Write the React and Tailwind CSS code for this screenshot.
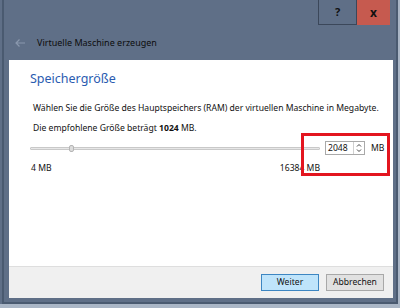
import React from "react";

export default function App() {
  const font = { fontFamily: '"Noto Sans", "Liberation Sans", sans-serif' };
  return (
    <div
      className="relative w-[400px] h-[308px] overflow-hidden bg-[#5f6f87] flex flex-col"
      style={font}
    >
      {/* caption buttons */}
      <div className="h-[25px] flex justify-end pr-[10px] shrink-0">
        <div className="w-[39px] h-[25px] border border-t-0 border-[#3b475a] flex items-center justify-center text-[11px] font-bold text-[#111]">
          ?
        </div>
        <div className="w-[33px] h-[25px] bg-[#c65a4f] flex items-center justify-center text-[12px] font-bold text-[#111]">
          x
        </div>
      </div>
      {/* title row */}
      <div className="h-[35px] flex items-center shrink-0">
        <svg width="12" height="10" viewBox="0 0 12 10" className="ml-[14px]">
          <path d="M11 5H2M5.5 1.5L2 5l3.5 3.5" stroke="#8a98ad" strokeWidth="1.2" fill="none" />
        </svg>
        <span className="ml-[11px] text-[9px] text-[#0d0d0d] leading-none">
          Virtuelle Maschine erzeugen
        </span>
      </div>
      {/* body */}
      <div className="flex-1 flex flex-col ml-[9px] mr-[7px]">
        <div className="h-[206px] bg-white shrink-0 pl-[21px] flex flex-col">
          <div className="h-[38px] pt-[11px] text-[12.5px] leading-[16px] text-[#2a5bb0]">
            Speichergröße
          </div>
          <div className="h-[20px] pl-[3px] text-[8.6px] leading-[20px] text-[#111]">
            Wählen Sie die Größe des Hauptspeichers (RAM) der virtuellen Maschine in Megabyte.
          </div>
          <div className="h-[20px] pl-[3px] text-[8.6px] leading-[20px] text-[#111]">
            Die empfohlene Größe beträgt <span className="font-bold">1024</span> MB.
          </div>
          <div className="h-[20px] flex items-center">
            <div className="relative w-[290px] h-[3px] bg-[#e7e7e7] border border-[#c9c9c9] rounded-[1px]">
              <div className="absolute left-[38px] top-[-3px] w-[5px] h-[7px] bg-[#dcdcdc] border border-[#b5b5b5] rounded-[2px]" />
            </div>
            <div className="ml-[5px] w-[40px] h-[14px] border border-[#a9a9a9] flex">
              <div className="flex-1 text-[8.6px] leading-[12px] pl-[2px] text-[#111]">2048</div>
              <div className="w-[11px] border-l border-[#d0d0d0] flex flex-col">
                <svg width="10" height="6" viewBox="0 0 10 6"><path d="M3 4.5L5 2.5L7 4.5" stroke="#444" strokeWidth="1" fill="none" /></svg>
                <svg width="10" height="6" viewBox="0 0 10 6"><path d="M3 1.5L5 3.5L7 1.5" stroke="#444" strokeWidth="1" fill="none" /></svg>
              </div>
            </div>
            <span className="ml-[6px] text-[8.6px] text-[#111]">MB</span>
          </div>
          <div className="h-[20px] flex items-center text-[8.6px] text-[#111] w-[290px] justify-between">
            <span className="pl-[1px]">4 MB</span>
            <span>16384 MB</span>
          </div>
        </div>
        <div className="h-[32px] bg-[#f0f0f0] border-t border-[#dedede] shrink-0 flex items-center justify-end pr-[9px] gap-[7px]">
          <button className="w-[58px] h-[17px] bg-[#bfe4fb] border border-[#3d86c2] text-[8.6px] text-[#111]">
            Weiter
          </button>
          <button className="w-[58px] h-[17px] bg-[#e1e1e1] border border-[#a8a8a8] text-[8.6px] text-[#111]">
            Abbrechen
          </button>
        </div>
        <div className="flex-1" />
      </div>
      {/* annotation */}
      <div className="absolute left-[301px] top-[133px] w-[89px] h-[43px] border-[3px] border-[#e3151f]" />
      {/* frame edges */}
      <div className="absolute left-[2px] top-[0px] w-[2px] h-[303px] bg-[#4a5a70]" />
      <div className="absolute left-[2px] top-[302px] w-[396px] h-[2px] bg-[#4a5a70]" />
      <div className="absolute left-[0px] top-[304px] w-[400px] h-[4px] bg-[#aab6c6]" />
      <div className="absolute left-[396px] top-[0px] w-[2px] h-[304px] bg-[#4a5a70]" />
      <div className="absolute left-[398px] top-[0px] w-[2px] h-[308px] bg-[#aab6c6]" />
    </div>
  );
}
